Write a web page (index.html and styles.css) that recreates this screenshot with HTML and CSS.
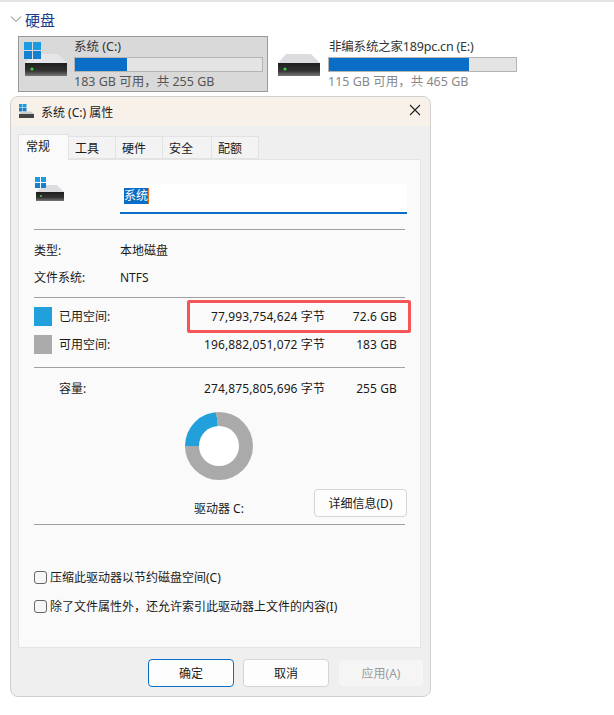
FILE: index.html
```html
<!DOCTYPE html>
<html lang="zh-CN">
<head>
    <meta charset="UTF-8">
    <meta name="viewport" content="width=device-width, initial-scale=1.0">
    <title>系统 (C:) 属性</title>
    <link rel="stylesheet" href="styles.css">
</head>
<body>

<svg class="icon-defs" width="0" height="0">
    <defs>
        <linearGradient id="driveFront" x1="0" y1="0" x2="0" y2="1">
            <stop offset="0" stop-color="#1e1e1e"/>
            <stop offset="0.6" stop-color="#333"/>
            <stop offset="1" stop-color="#777"/>
        </linearGradient>
    </defs>
</svg>

<div class="drive-section">
    <div class="section-head">
        <svg class="chevron" width="12" height="8" viewBox="0 0 12 8"><path d="M1 1.5 L6 6.5 L11 1.5" fill="none" stroke="#777" stroke-width="1"/></svg>
        <span class="section-title">硬盘</span>
    </div>

    <div class="drive-list">
        <div class="drive-tile selected">
            <svg class="drive-icon" width="44" height="42" viewBox="0 0 44 42">
                <path d="M1 24 L9 15 H34 L43 24 Z" fill="#e6e6ea"/>
                <rect x="1" y="24" width="42" height="13" fill="url(#driveFront)"/>
                <circle cx="8" cy="30" r="1.6" fill="#35d23c"/>
                <rect x="0" y="3" width="8" height="8" fill="#1c9be0"/>
                <rect x="9" y="3" width="8" height="8" fill="#1c9be0"/>
                <rect x="0" y="12" width="8" height="8" fill="#1282d0"/>
                <rect x="9" y="12" width="8" height="8" fill="#1282d0"/>
            </svg>
            <div class="drive-info">
                <div class="drive-name">系统 (C:)</div>
                <div class="drive-bar"><div class="drive-used" style="width: 28%"></div></div>
                <div class="drive-free">183 GB 可用，共 255 GB</div>
            </div>
        </div>
        <div class="drive-tile">
            <svg class="drive-icon" width="44" height="42" viewBox="0 0 44 42">
                <path d="M0 24 L8 15 H33 L42 24 Z" fill="#dcdce0"/>
                <rect x="0" y="24" width="42" height="13" fill="url(#driveFront)"/>
                <circle cx="7" cy="30" r="1.6" fill="#35d23c"/>
            </svg>
            <div class="drive-info">
                <div class="drive-name narrow">非编系统之家189pc.cn (E:)</div>
                <div class="drive-bar"><div class="drive-used" style="width: 75%"></div></div>
                <div class="drive-free muted">115 GB 可用，共 465 GB</div>
            </div>
        </div>
    </div>
</div>

<div class="dialog">
    <div class="dialog-title">
        <svg width="16" height="16" viewBox="0 0 16 16">
            <rect x="0" y="0" width="3.5" height="3.5" fill="#1c9be0"/>
            <rect x="4" y="0" width="3.5" height="3.5" fill="#1c9be0"/>
            <rect x="0" y="4" width="3.5" height="3.5" fill="#1282d0"/>
            <rect x="4" y="4" width="3.5" height="3.5" fill="#1282d0"/>
            <path d="M0 10 L3 7.5 H12 L15 10 Z" fill="#ccc"/>
            <rect x="0" y="10" width="15" height="4" fill="#444"/>
        </svg>
        <span class="dialog-name">系统 (C:) 属性</span>
        <svg class="close-icon" width="12" height="12" viewBox="0 0 12 12"><path d="M1 1 L11 11 M11 1 L1 11" stroke="#222" stroke-width="1.1"/></svg>
    </div>

    <div class="tabs">
        <div class="tab active">常规</div>
        <div class="tab">工具</div>
        <div class="tab">硬件</div>
        <div class="tab wide">安全</div>
        <div class="tab">配额</div>
    </div>

    <div class="panel">
        <div class="name-row">
            <svg class="name-icon" width="44" height="28" viewBox="0 0 44 28">
                <path d="M2 16 L11 9 H23 L30 16 Z" fill="#dcdce0"/>
                <rect x="2" y="16" width="28" height="9" fill="url(#driveFront)"/>
                <circle cx="7" cy="20" r="1.1" fill="#35d23c"/>
                <rect x="1" y="1" width="5" height="5" fill="#1c9be0"/>
                <rect x="7" y="1" width="5" height="5" fill="#1c9be0"/>
                <rect x="1" y="7" width="5" height="5" fill="#1282d0"/>
                <rect x="7" y="7" width="5" height="5" fill="#1282d0"/>
            </svg>
            <div class="name-input"><span class="name-selected">系统</span></div>
        </div>

        <div class="divider first"></div>

        <div class="info-row first-info"><span class="info-label">类型:</span><span>本地磁盘</span></div>
        <div class="info-row"><span class="info-label">文件系统:</span><span>NTFS</span></div>

        <div class="divider second"></div>

        <div class="space-rows">
            <div class="highlight"></div>
            <div class="space-row">
                <span class="swatch used"></span>
                <span>已用空间:</span>
                <span class="num">77,993,754,624 字节</span>
                <span class="num">72.6 GB</span>
            </div>
            <div class="space-row">
                <span class="swatch free"></span>
                <span>可用空间:</span>
                <span class="num">196,882,051,072 字节</span>
                <span class="num">183 GB</span>
            </div>
        </div>

        <div class="divider third"></div>

        <div class="space-row capacity">
            <span></span>
            <span>容量:</span>
            <span class="num">274,875,805,696 字节</span>
            <span class="num">255 GB</span>
        </div>

        <div class="donut"><div class="donut-hole"></div></div>

        <div class="drive-row">
            <span class="drive-label">驱动器 C:</span>
            <button class="btn details">详细信息(D)</button>
        </div>

        <div class="divider fourth"></div>

        <label class="check first-check"><span class="box"></span>压缩此驱动器以节约磁盘空间(C)</label>
        <label class="check"><span class="box"></span>除了文件属性外，还允许索引此驱动器上文件的内容(I)</label>
    </div>

    <div class="dialog-buttons">
        <button class="btn primary">确定</button>
        <button class="btn">取消</button>
        <button class="btn disabled">应用(A)</button>
    </div>
</div>

</body>
</html>
```

FILE: styles.css
```css
body {
    margin: 0;
    height: 715px;
    overflow: hidden;
    background: #fff;
    border-top: 2px solid #e4e4e4;
    box-sizing: border-box;
    font-family: "Noto Sans", "Noto Sans CJK SC", sans-serif;
    font-size: 12px;
    color: #1a1a1a;
}

.icon-defs {
    position: absolute;
}

.drive-section {
    padding-left: 10px;
}

.section-head {
    display: flex;
    align-items: center;
    gap: 3px;
    height: 34px;
}

.section-title {
    font-size: 15px;
    color: #1d3a8c;
}

.drive-list {
    display: flex;
    margin-left: 8px;
    gap: 4px;
}

.drive-tile {
    width: 250px;
    height: 56px;
    display: flex;
    box-sizing: border-box;
    border: 1px solid transparent;
    padding: 0 4px 0 5px;
    gap: 6px;
}

.drive-tile.selected {
    background: #d9d9d9;
    border-color: #999;
}

.drive-icon {
    flex: none;
    margin-top: 2px;
}

.drive-info {
    flex: 1;
}

.drive-name {
    height: 20px;
    line-height: 20px;
    font-size: 12.5px;
    color: #333;
}

.drive-name.narrow {
    letter-spacing: -0.2px;
    padding-left: 1px;
}

.drive-bar {
    height: 15px;
    background: #e4e4e4;
    border: 1px solid #b4b4b4;
    box-sizing: border-box;
}

.drive-used {
    height: 100%;
    background: #0a6ec8;
}

.drive-free {
    line-height: 20px;
    font-size: 12.5px;
    color: #555;
}

.drive-free.muted {
    color: #888;
}

.dialog {
    width: 421px;
    height: 601px;
    margin: 4px 0 0 10px;
    box-sizing: border-box;
    background: #efefef;
    border: 1px solid #cfcfcf;
    border-radius: 8px;
    overflow: hidden;
}

.dialog-title {
    height: 29px;
    background: #f8f1ea;
    display: flex;
    align-items: center;
    padding: 0 9px 0 8px;
    gap: 6px;
}

.dialog-name {
    flex: 1;
    font-size: 12px;
}

.close-icon {
    margin-top: -3px;
}

.tabs {
    display: flex;
    padding: 9px 0 0 7px;
    height: 24px;
}

.tab {
    width: 47px;
    height: 23px;
    line-height: 23px;
    padding-left: 6px;
    background: #f3f3f3;
    border: 1px solid #e2e2e2;
    border-left: none;
    box-sizing: border-box;
    margin-top: 1px;
}

.tab.wide {
    width: 49px;
}

.tab.active {
    width: 51px;
    height: 26px;
    margin-top: -1px;
    background: #fafafa;
    border-left: 1px solid #e2e2e2;
    border-bottom: none;
    position: relative;
    z-index: 1;
    padding-left: 7px;
}

.panel {
    width: 403px;
    height: 489px;
    margin-left: 7px;
    box-sizing: border-box;
    background: #fafafa;
    border: 1px solid #e4e4e4;
    padding: 0 15px;
}

.name-row {
    display: flex;
    padding-top: 16px;
    height: 54px;
    box-sizing: border-box;
    gap: 42px;
}

.name-icon {
    flex: none;
}

.name-input {
    flex: none;
    width: 287px;
    height: 30px;
    background: #fff;
    border-bottom: 2px solid #0a6ec8;
    box-sizing: border-box;
    padding: 3px 0 0 4px;
    margin-top: 8px;
}

.name-selected {
    display: inline-block;
    height: 16px;
    line-height: 16px;
    background: #0a6ec8;
    border-right: 1px solid #e8701a;
    color: #fff;
}

.divider {
    height: 1px;
    width: 371px;
    background: #a0a0a0;
}

.divider.first {
    margin-top: 15px;
}

.info-row {
    display: flex;
    height: 27px;
    line-height: 27px;
}

.first-info {
    margin-top: 7px;
}

.info-label {
    width: 86px;
}

.divider.second {
    margin-top: 6px;
}

.space-rows {
    position: relative;
    padding-top: 4px;
}

.highlight {
    position: absolute;
    left: 153px;
    top: 2px;
    width: 224px;
    height: 33px;
    box-sizing: border-box;
    border: 3px solid #f55555;
    border-radius: 2px;
}

.space-row {
    display: grid;
    grid-template-columns: 25px 80px 186px 72px;
    height: 28px;
    align-items: center;
}

.num {
    text-align: right;
    letter-spacing: 0.1px;
}

.swatch {
    width: 18px;
    height: 19px;
}

.swatch.used {
    background: #22a0dc;
}

.swatch.free {
    background: #aaa;
}

.divider.third {
    margin-top: 9px;
}

.capacity {
    margin-top: 6px;
}

.donut {
    width: 68px;
    height: 68px;
    margin: 10px 0 0 151px;
    border-radius: 50%;
    background: conic-gradient(#aaa 0 270deg, #22a0dc 270deg 355deg, #aaa 355deg);
    display: flex;
    align-items: center;
    justify-content: center;
}

.donut-hole {
    width: 40px;
    height: 40px;
    border-radius: 50%;
    background: #fff;
}

.drive-row {
    display: flex;
    justify-content: space-between;
    align-items: flex-end;
    height: 35px;
    padding-left: 160px;
    width: 213px;
    margin-top: 2px;
}

.drive-label {
    line-height: 18px;
    margin-bottom: -1px;
}

.btn {
    font: inherit;
    color: #1a1a1a;
    background: #fdfdfd;
    border: 1px solid #d4d4d4;
    border-radius: 4px;
    padding: 0;
}

.btn.details {
    flex: none;
    width: 93px;
    height: 28px;
}

.divider.fourth {
    margin-top: 7px;
}

.check {
    display: flex;
    align-items: center;
    gap: 3px;
    height: 18px;
    margin-bottom: 11px;
}

.first-check {
    margin-top: 43px;
}

.box {
    width: 11px;
    height: 11px;
    border: 1px solid #666;
    border-radius: 3px;
    background: #f6f6f6;
}

.dialog-buttons {
    display: flex;
    justify-content: flex-end;
    gap: 9px;
    padding: 11px 6px 0 0;
}

.dialog-buttons .btn {
    width: 86px;
    height: 28px;
}

.btn.primary {
    border-color: #0a6ec8;
}

.btn.disabled {
    background: #f5f5f5;
    border-color: #eee;
    color: #999;
}
```
